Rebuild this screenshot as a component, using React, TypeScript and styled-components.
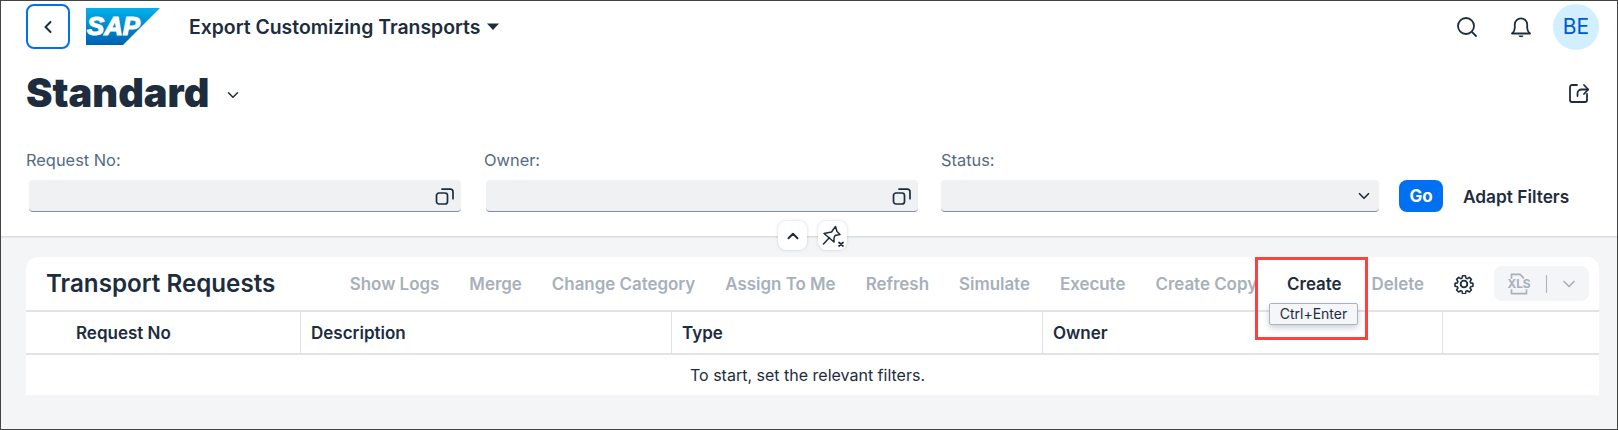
import React from "react";
import styled, { createGlobalStyle } from "styled-components";
import { ChevronDown, ChevronLeft, ChevronUp, Search } from "lucide-react";

const ink = "#1d2d3e";
const muted = "#556b82";
const disabled = "#a7b0bb";
const line = "#e1e3e6";
const FONT = `Inter, "Noto Sans", sans-serif`;

const GlobalStyle = createGlobalStyle`
  html, body { margin: 0; padding: 0; background: #fff; }
  body { font-family: ${FONT}; color: ${ink}; }
`;

const Page = styled.div`
  position: relative;
  box-sizing: border-box;
  width: 1618px;
  height: 430px;
  border: 1px solid #444;
  background: #f4f5f6;
  display: flex;
  flex-direction: column;
  overflow: hidden;
`;

const Header = styled.header`
  position: relative;
  background: #fff;
  height: 236px;
  flex: none;
  border-bottom: 1px solid #d9dcdf;
  box-shadow: 0 1px 1px rgba(29, 45, 62, 0.06);
  box-sizing: border-box;
  padding: 3px 28px 0 25px;
`;

const ShellBar = styled.div`
  display: flex;
  align-items: center;
  height: 45px;
`;

const BackButton = styled.button`
  width: 44px;
  height: 45px;
  box-sizing: border-box;
  border: 2px solid #0070f2;
  border-radius: 8px;
  background: #fff;
  color: ${ink};
  padding: 0;
  display: flex;
  align-items: center;
  justify-content: center;
  margin-right: 16px;
`;

const AppTitle = styled.div`
  display: flex;
  align-items: center;
  margin-left: 29px;
  font-size: 19.4px;
  font-weight: 600;
  color: ${ink};
  gap: 7px;
`;

const ShellActions = styled.div`
  margin-left: auto;
  display: flex;
  align-items: center;
  margin-right: -10px;
`;

const ShellIcon = styled.span`
  display: flex;
  width: 24px;
  justify-content: center;
  margin-right: 30px;
  color: ${ink};
  &:nth-child(2) { margin-right: 20px; }
`;

const Avatar = styled.div`
  width: 46px;
  height: 46px;
  border-radius: 50%;
  background: #d1efff;
  color: #0057d2;
  display: flex;
  align-items: center;
  justify-content: center;
  font-size: 21px;
`;

const TitleRow = styled.div`
  display: flex;
  align-items: center;
  height: 64px;
  box-sizing: border-box;
  padding-top: 18px;
  margin-top: 3px;
`;

const VariantTitle = styled.h1`
  margin: 0;
  font-size: 39.8px;
  font-weight: 900;
  line-height: 44px;
  color: ${ink};
`;

const VariantArrow = styled.span`
  display: flex;
  margin-left: 15px;
  margin-top: 4px;
`;

const ShareIcon = styled.span`
  margin-left: auto;
  display: flex;
  margin-right: -1px;
`;

const FilterBar = styled.div`
  display: flex;
  align-items: flex-end;
  margin-top: 34px;
`;

const Field = styled.div<{ $w: number; $gap: number }>`
  width: ${({ $w }) => $w}px;
  margin-right: ${({ $gap }) => $gap}px;
  flex: none;
`;

const FieldLabel = styled.label<{ $offset: number }>`
  display: block;
  padding-left: ${({ $offset }) => $offset}px;
  font-size: 16.4px;
  line-height: 20px;
  color: ${muted};
  margin-bottom: 10px;
`;

const Input = styled.div`
  height: 32px;
  margin-left: 3px;
  box-sizing: border-box;
  background: #eff1f2;
  border-radius: 4px;
  border-bottom: 1px solid #7d8ea3;
  display: flex;
  align-items: center;
  justify-content: flex-end;
  padding-right: 6px;
  color: ${ink};
`;

const GoButton = styled.button`
  width: 44px;
  height: 32px;
  border: 0;
  border-radius: 8px;
  background: #0070f2;
  color: #fff;
  font: 700 17px ${FONT};
  padding: 0;
`;

const AdaptButton = styled.button`
  border: 0;
  background: none;
  padding: 0;
  margin-left: 20px;
  height: 32px;
  font: 600 17.3px ${FONT};
  color: ${ink};
  white-space: nowrap;
`;

const HeaderToggles = styled.div`
  position: absolute;
  left: 777px;
  top: 220px;
  display: flex;
  gap: 11px;
`;

const ToggleButton = styled.button`
  width: 29px;
  height: 29px;
  border: 0;
  border-radius: 8px;
  background: #fff;
  box-shadow: 0 0 3px rgba(85, 107, 130, 0.3);
  padding: 0;
  color: ${ink};
  display: flex;
  align-items: center;
  justify-content: center;
`;

const Card = styled.section`
  margin: 20px 18px 0 25px;
  background: #fff;
  border-radius: 12px 12px 0 0;
`;

const Toolbar = styled.div`
  height: 55px;
  display: flex;
  align-items: center;
  box-sizing: border-box;
  padding: 0 10px 0 20px;
  border-bottom: 2px solid ${line};
`;

const CardTitle = styled.h2`
  margin: 0;
  font-size: 24.2px;
  font-weight: 600;
  color: ${ink};
  margin-right: auto;
`;

const Actions = styled.div`
  display: flex;
  align-items: center;
  gap: 30px;
`;

const Action = styled.span<{ $active?: boolean }>`
  font-size: 16.92px;
  font-weight: 600;
  color: ${({ $active }) => ($active ? ink : disabled)};
  white-space: nowrap;
`;

const Gear = styled.span`
  display: flex;
  margin-left: 30px;
  color: ${ink};
`;

const ExportButton = styled.div`
  width: 95px;
  height: 35px;
  margin-left: 20px;
  border-radius: 8px;
  background: #f4f5f6;
  color: ${disabled};
  display: flex;
  align-items: center;
  justify-content: center;
  gap: 12px;
`;

const Divider = styled.span`
  width: 1px;
  height: 18px;
  background: ${disabled};
`;

const HeadRow = styled.div`
  display: grid;
  grid-template-columns: 275px 371px 371px 400px 1fr;
  height: 43px;
  box-sizing: border-box;
  border-bottom: 2px solid ${line};
`;

const HeadCell = styled.div<{ $first?: boolean }>`
  display: flex;
  align-items: center;
  font-size: 17px;
  font-weight: 600;
  color: ${ink};
  box-sizing: border-box;
  padding-left: ${({ $first }) => ($first ? 50 : 10)}px;
  border-right: 1px solid ${line};
  &:last-child { border-right: 0; }
`;

const EmptyRow = styled.div`
  height: 40px;
  box-sizing: border-box;
  padding-right: 10px;
  display: flex;
  align-items: center;
  justify-content: center;
  font-size: 16px;
  color: ${ink};
`;

const Highlight = styled.div`
  position: absolute;
  left: 1254px;
  top: 256px;
  width: 113px;
  height: 83px;
  box-sizing: border-box;
  border: 3px solid #ff4040;
  pointer-events: none;
`;

const ShortcutTip = styled.div`
  position: absolute;
  left: 1268px;
  top: 302px;
  width: 89px;
  height: 22px;
  box-sizing: border-box;
  background: #f5f6f7;
  border: 1px solid #a9b4be;
  border-radius: 2px;
  box-shadow: 0 3px 6px rgba(85, 107, 130, 0.3);
  font-size: 14px;
  line-height: 20px;
  text-align: center;
  color: ${ink};
`;

const SapLogo = () => (
  <svg width="74" height="37" viewBox="0 0 74 37" style={{ flex: "none" }}>
    <defs>
      <linearGradient id="sapBlue" x1="0" y1="0" x2="0" y2="1">
        <stop offset="0" stopColor="#00b1eb" />
        <stop offset="1" stopColor="#0061b1" />
      </linearGradient>
    </defs>
    <polygon points="0,0 74,0 37,37 0,37" fill="url(#sapBlue)" />
    <text
      x="1"
      y="27"
      fill="#fff"
      stroke="#fff"
      strokeWidth="1.2"
      textLength="53"
      lengthAdjust="spacingAndGlyphs"
      style={{ font: `italic 700 26px "Liberation Sans", sans-serif` }}
    >
      SAP
    </text>
  </svg>
);

const CopyIcon = () => (
  <svg width="20" height="20" viewBox="0 0 20 20" fill="none" stroke="currentColor" strokeWidth="1.7">
    <rect x="1.5" y="7" width="11" height="11" rx="2.5" />
    <path d="M7 3.2h8.5a2.5 2.5 0 0 1 2.5 2.5v7" strokeLinecap="round" />
  </svg>
);

const ShareGlyph = () => (
  <svg width="22" height="22" viewBox="0 0 22 22" fill="none" stroke={ink} strokeWidth="1.8" strokeLinecap="round" strokeLinejoin="round">
    <path d="M9 3H4a2 2 0 0 0-2 2v13a2 2 0 0 0 2 2h13a2 2 0 0 0 2-2v-6" />
    <path d="M9.5 14v-2.5a4 4 0 0 1 4-4h6.5" />
    <path d="M16 3l4.2 4.5L16 12" />
  </svg>
);

const BellIcon = () => (
  <svg width="20" height="22" viewBox="0 0 20 22" fill="none" stroke={ink} strokeWidth="1.8" strokeLinejoin="round">
    <path d="M1 17.5h18c-1.8-1.5-2.8-2.6-2.8-5.5V8.5a6.2 6.2 0 0 0-12.4 0V12c0 2.9-1 4-2.8 5.5z" />
    <path d="M7.5 19.5a2.5 1.8 0 0 0 5 0z" fill={ink} stroke="none" />
  </svg>
);

const PinOffIcon = () => (
  <svg width="24" height="24" viewBox="0 0 24 24" fill="none" stroke={ink} strokeWidth="1.5" strokeLinecap="round" strokeLinejoin="round">
    <path d="M3 9.5l7.5-1.5L14.5 2.5l1.5 5 3 3-5 1-1 2.5 0 4z" />
    <path d="M8.5 13.5L2.5 20" />
    <path d="M18 18.5l4 3.5M22 18.5l-4 3.5" strokeWidth="1.7" />
  </svg>
);

const GearIcon = () => (
  <svg width="20" height="20" viewBox="0 0 24 24" fill="none" stroke={ink} strokeWidth="2.2" strokeLinejoin="round">
    <path d="M10 1.500h4l.7 3.300 1.900.8 2.900-1.800 2.800 2.800-1.800 2.900.8 1.900 3.200.6v4l-3.200.7-.8 1.900 1.800 2.800-2.800 2.800-2.900-1.800-1.900.8-.7 3.300h-4l-.7-3.300-1.900-.8-2.900 1.800-2.800-2.800 1.800-2.800-.8-1.900-3.200-.7v-4l3.200-.6.800-1.900-1.800-2.900 2.800-2.800 2.900 1.800 1.900-.8z" transform="translate(12 12) scale(.86) translate(-12 -13)" />
    <circle cx="12" cy="12" r="4" />
  </svg>
);

const XlsIcon = () => (
  <svg width="30" height="30" viewBox="0 0 28 28" fill="none" stroke={disabled} strokeWidth="1.5">
    <path d="M7 9V5h8l3 3v1M7 19v4h14v-4" />
    <text x="14" y="18" textAnchor="middle" fill={disabled} stroke="none" style={{ font: `700 11px Inter, sans-serif` }}>
      XLS
    </text>
  </svg>
);

const actions = ["Show Logs", "Merge", "Change Category", "Assign To Me", "Refresh", "Simulate", "Execute", "Create Copy", "Create", "Delete"];
const columns = ["Request No", "Description", "Type", "Owner", ""];

export default function App() {
  return (
    <>
      <GlobalStyle />
      <Page>
        <Header>
          <ShellBar>
            <BackButton>
              <ChevronLeft size={20} strokeWidth={2.4} />
            </BackButton>
            <SapLogo />
            <AppTitle>
              Export Customizing Transports
              <svg width="12" height="7" viewBox="0 0 12 7">
                <path d="M0 .5h12L6 7z" fill={ink} />
              </svg>
            </AppTitle>
            <ShellActions>
              <ShellIcon>
                <Search size={24} strokeWidth={1.8} />
              </ShellIcon>
              <ShellIcon>
                <BellIcon />
              </ShellIcon>
              <Avatar>BE</Avatar>
            </ShellActions>
          </ShellBar>
          <TitleRow>
            <VariantTitle>Standard</VariantTitle>
            <VariantArrow>
              <ChevronDown size={18} strokeWidth={2} />
            </VariantArrow>
            <ShareIcon>
              <ShareGlyph />
            </ShareIcon>
          </TitleRow>
          <FilterBar>
            <Field $w={435} $gap={22}>
              <FieldLabel $offset={0}>Request No:</FieldLabel>
              <Input>
                <CopyIcon />
              </Input>
            </Field>
            <Field $w={435} $gap={20}>
              <FieldLabel $offset={1}>Owner:</FieldLabel>
              <Input>
                <CopyIcon />
              </Input>
            </Field>
            <Field $w={441} $gap={20}>
              <FieldLabel $offset={3}>Status:</FieldLabel>
              <Input>
                <ChevronDown size={18} strokeWidth={2.2} />
              </Input>
            </Field>
            <GoButton>Go</GoButton>
            <AdaptButton>Adapt Filters</AdaptButton>
          </FilterBar>
          <HeaderToggles>
            <ToggleButton>
              <ChevronUp size={18} strokeWidth={2.6} />
            </ToggleButton>
            <ToggleButton>
              <PinOffIcon />
            </ToggleButton>
          </HeaderToggles>
        </Header>
        <Card>
          <Toolbar>
            <CardTitle>Transport Requests</CardTitle>
            <Actions>
              {actions.map((a) => (
                <Action key={a} $active={a === "Create"}>
                  {a}
                </Action>
              ))}
            </Actions>
            <Gear>
              <GearIcon />
            </Gear>
            <ExportButton>
              <XlsIcon />
              <Divider />
              <ChevronDown size={20} />
            </ExportButton>
          </Toolbar>
          <HeadRow>
            {columns.map((c, i) => (
              <HeadCell key={c || i} $first={i === 0}>
                {c}
              </HeadCell>
            ))}
          </HeadRow>
          <EmptyRow>To start, set the relevant filters.</EmptyRow>
        </Card>
        <Highlight />
        <ShortcutTip>Ctrl+Enter</ShortcutTip>
      </Page>
    </>
  );
}
